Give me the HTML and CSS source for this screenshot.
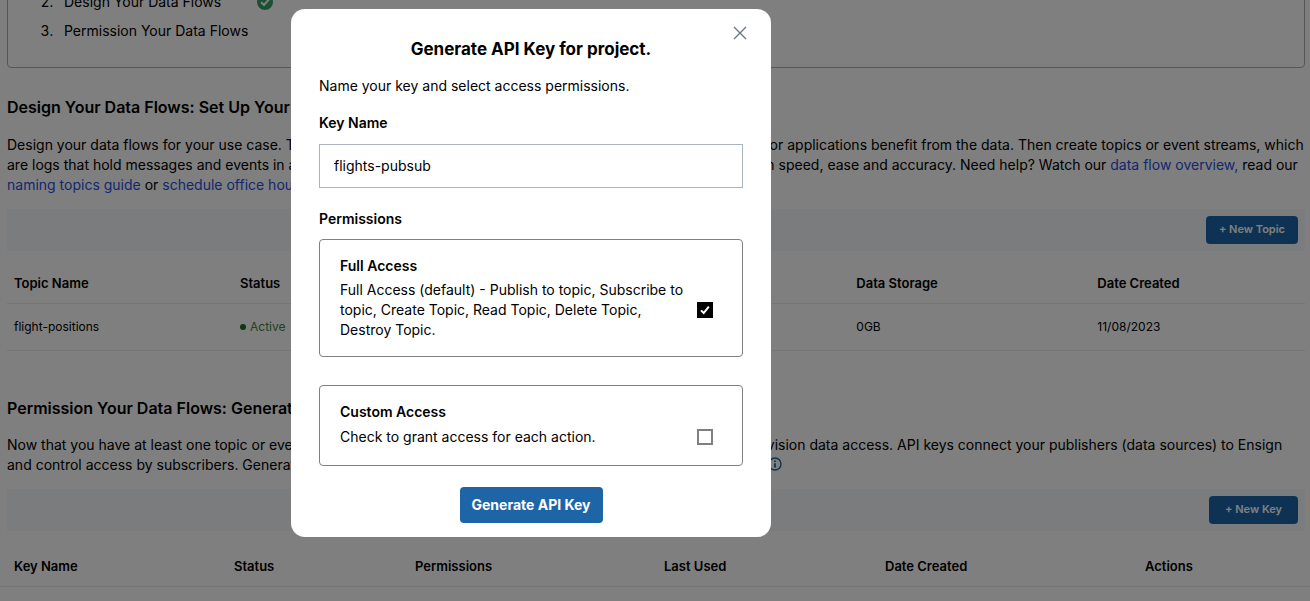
FILE: index.html
```
<!DOCTYPE html>
<html lang="en">
<head>
<meta charset="utf-8">
<meta name="viewport" content="width=device-width, initial-scale=1">
<title>Generate API Key</title>
<link rel="stylesheet" href="styles.css">
</head>
<body>
<main class="page">
  <section class="steps">
    <ol class="steps-list" start="2">
      <li><span class="step">Design Your Data Flows
        <svg class="step-check" viewBox="0 0 16 16" aria-hidden="true"><circle cx="8" cy="8" r="8" fill="#37a169"/><path d="M4.2 8.3 7 11l5-5.6" fill="none" stroke="#fff" stroke-width="2"/></svg></span></li>
      <li>Permission Your Data Flows</li>
    </ol>
  </section>

  <section class="section">
    <h2 class="section-title">Design Your Data Flows: Set Up Your Topics</h2>
    <p class="section-text">Design your data flows for your use case. Think about who produces the raw data and which teams, models, users or applications benefit from the data. Then create topics or event streams, which are logs that hold messages and events in a sequence. Name your topics so that your teams can now find them with speed, ease and accuracy. Need help? Watch our <a href="#overview">data flow overview,</a> read our <a href="#guide">naming topics guide</a> or <a href="#hours">schedule office hours.</a></p>
    <div class="toolbar"><button class="btn btn-small" type="button">+ New Topic</button></div>
    <table class="table topics">
      <thead><tr><th class="w-topic">Topic Name</th><th class="w-status">Status</th><th class="w-pub">Publishers</th><th class="w-sub">Subscribers</th><th class="w-storage">Data Storage</th><th>Date Created</th></tr></thead>
      <tbody><tr><td>flight-positions</td><td><span class="active">Active</span></td><td>0</td><td>0</td><td>0GB</td><td>11/08/2023</td></tr></tbody>
    </table>
  </section>

  <section class="section section-keys">
    <h2 class="section-title">Permission Your Data Flows: Generate API Keys</h2>
    <p class="section-text keys-text">Now that you have at least one topic or event stream, generate API keys for each topic in your simple project to provision data access. API keys connect your publishers (data sources) to Ensign and control access by subscribers. Generate at least one API key for each publisher and for each subscriber. More
      <svg class="info" viewBox="0 0 14 14" role="img" aria-label="Information"><circle cx="7" cy="7" r="6" fill="none" stroke="#1d65a6" stroke-width="1.4"/><path d="M7 6.2v4.2M7 3.4v1.6" stroke="#1d65a6" stroke-width="1.8"/></svg></p>
    <div class="toolbar"><button class="btn btn-small btn-key" type="button">+ New Key</button></div>
    <table class="table keys">
      <thead><tr><th class="k-name">Key Name</th><th class="k-status">Status</th><th class="k-perm">Permissions</th><th class="k-used">Last Used</th><th class="k-created">Date Created</th><th>Actions</th></tr></thead>
    </table>
  </section>
</main>

<div class="overlay">
  <form class="modal" role="dialog" aria-modal="true" aria-labelledby="modal-title">
    <button class="close" type="button" aria-label="Close"><svg viewBox="0 0 14 14" aria-hidden="true"><path d="M1 1l12 12M13 1 1 13" fill="none" stroke="#6b7785" stroke-width="1.4"/></svg></button>
    <h1 class="modal-title" id="modal-title">Generate API Key for project.</h1>
    <p class="modal-text">Name your key and select access permissions.</p>
    <label class="label" for="key-name">Key Name</label>
    <input class="field" id="key-name" type="text" value="flights-pubsub">
    <h2 class="label permissions">Permissions</h2>
    <div class="card">
      <h3 class="card-title">Full Access</h3>
      <div class="card-row">
        <label for="full">Full Access (default) - Publish to topic, Subscribe to topic, Create Topic, Read Topic, Delete Topic, Destroy Topic.</label>
        <span class="check"><input id="full" type="checkbox" checked><svg viewBox="0 0 16 16" aria-hidden="true"><path d="M4 8.4 6.7 11l5.1-6.4" fill="none" stroke="#fff" stroke-width="2"/></svg></span>
      </div>
    </div>
    <div class="card card-custom">
      <h3 class="card-title">Custom Access</h3>
      <div class="card-row">
        <label for="custom">Check to grant access for each action.</label>
        <span class="check"><input id="custom" type="checkbox"></span>
      </div>
    </div>
    <button class="btn btn-submit" type="button">Generate API Key</button>
  </form>
</div>
</body>
</html>
```
FILE: styles.css
```
* { box-sizing: border-box; }

body {
  margin: 0;
  height: 100vh;
  overflow: hidden;
  background: #fff;
  color: #000;
  font: 14px/20px Inter, "Liberation Sans", sans-serif;
}

h1, h2, h3, p, ol { margin: 0; }
button, input { font: inherit; }
a { color: #2a4fdc; text-decoration: none; }

.page { margin-top: -25px; padding: 0 5px 0 7px; }

.steps {
  padding: 16px 34px 26px;
  border: 1px solid #aeaeae;
  border-radius: 4px;
}
.steps-list { display: grid; gap: 9px; padding-left: 15px; }
.steps-list li { padding-left: 7px; }
.step { display: inline-flex; align-items: center; gap: 36px; }
.step-check { width: 16px; height: 16px; }

.section { padding-top: 29px; }
.section-keys { padding-top: 47px; }
.section-title { font-size: 16px; line-height: 20px; font-weight: 600; }
.section-text { margin-top: 18px; }
.keys-text { margin-top: 17px; }
.info { width: 14px; height: 14px; vertical-align: -1px; }

.toolbar {
  display: flex;
  justify-content: flex-end;
  margin-top: 14px;
  padding: 7px;
  background: #f7f9fc;
}

.btn {
  border: 0;
  border-radius: 4px;
  background: #1d65a6;
  color: #fff;
  font-weight: 700;
}
.btn-small { height: 28px; padding: 0 13px 2px; font-size: 11px; line-height: 16px; font-weight: 600; }
.btn-key { padding: 0 16px 2px; }

.table { width: 100%; table-layout: fixed; border-collapse: collapse; font-size: 12px; text-align: left; }
.table th { height: 39px; padding: 0 7px; font-size: 13px; font-weight: 600; border-bottom: 1px solid #ebebeb; }
.table td { height: 47px; padding: 0 7px; border-bottom: 1px solid #ebebeb; }
.topics { margin-top: 13px; }
.w-topic { width: 226px; }
.w-status, .w-pub { width: 16%; }
.w-sub { width: 201px; }
.w-storage { width: 241px; }

.active { display: inline-flex; align-items: center; gap: 4px; color: #3d8545; }
.active::before { content: ""; width: 6px; height: 6px; border-radius: 50%; background: #1c6b2e; }

.keys { width: calc(100% + 12px); margin: 17px -5px 0 -7px; }
.keys th { padding-bottom: 2px; }
.keys th:first-child { padding-left: 14px; }
.k-name { width: 227px; }
.k-status { width: 181px; }
.k-perm { width: 249px; }
.k-used { width: 221px; }
.k-created { width: 260px; }

.overlay { position: fixed; inset: 0; background: rgba(0, 0, 0, .5); }

.modal {
  position: absolute;
  top: 9px;
  left: 291px;
  width: 480px;
  padding: 28px 28px 14px;
  border-radius: 14px;
  background: #fff;
}
.close {
  position: absolute;
  top: 14px;
  right: 21px;
  display: grid;
  place-items: center;
  width: 20px;
  height: 20px;
  padding: 0;
  border: 0;
  background: none;
}
.close svg { width: 14px; height: 14px; }
.modal-title { font-size: 17px; line-height: 24px; font-weight: 700; text-align: center; }
.modal-text { margin-top: 15px; }
.label { display: block; margin-top: 17px; font-size: 14px; line-height: 20px; font-weight: 600; }
.field {
  display: block;
  width: 100%;
  height: 44px;
  margin-top: 11px;
  padding: 0 14px 1px;
  border: 1px solid #a9b4bf;
  background: #fff;
  color: #000;
}
.permissions { margin: 21px 0 10px; }
.card { padding: 16px 28px 16px 20px; border: 1px solid #808080; border-radius: 4px; }
.card-custom { margin-top: 28px; padding-bottom: 18px; }
.card-title { font-size: 14px; line-height: 20px; font-weight: 600; }
.card-row {
  display: flex;
  align-items: center;
  justify-content: space-between;
  gap: 12px;
  min-height: 21px;
  margin-top: 4px;
}
.check { position: relative; display: block; flex: none; width: 17px; height: 16px; }
.check input {
  display: block;
  appearance: none;
  width: 16px;
  height: 16px;
  margin: 0;
  border: 2px solid #808080;
  background: #fff;
}
.check input:checked { border-color: #000; background: #000; }
.check svg { position: absolute; top: 0; left: 0; width: 16px; height: 16px; pointer-events: none; }
.btn-submit { display: block; height: 36px; margin: 21px auto 0; padding: 0 12px; }
```
